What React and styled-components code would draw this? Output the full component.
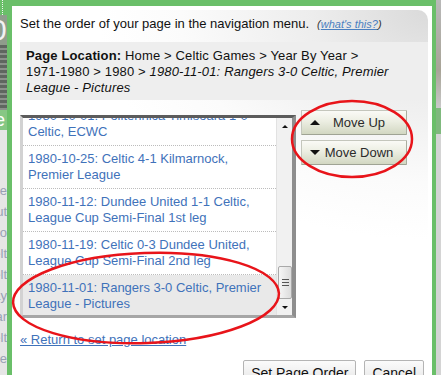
import React from "react";
import styled, { createGlobalStyle } from "styled-components";

const GlobalStyle = createGlobalStyle`
    html, body {
        margin: 0;
        padding: 0;
        background: #6abf69;
    }
    body {
        font-family: "Liberation Sans", Arial, sans-serif;
    }
`;

const items = [
    "1980-10-01: Politehnica Timisoara 1-0 Celtic, ECWC",
    "1980-10-25: Celtic 4-1 Kilmarnock, Premier League",
    "1980-11-12: Dundee United 1-1 Celtic, League Cup Semi-Final 1st leg",
    "1980-11-19: Celtic 0-3 Dundee United, League Cup Semi-Final 2nd leg",
    "1980-11-01: Rangers 3-0 Celtic, Premier League - Pictures",
];

const sideWords = ["Phone", "About", "Abo", "Celt", "Celt", "Day", "Par", "Celt", "He"];

const App = () => {
    return (
        <>
            <GlobalStyle />
            <Page>
                <LeftBackdrop>
                    <BackdropTop />
                    <BackdropBanner>0</BackdropBanner>
                    <BackdropStripes />
                    <BackdropNav>e</BackdropNav>
                    <BackdropMenu>
                        {sideWords.map((w, i) => (
                            <MenuWord key={i}><span>{w}</span></MenuWord>
                        ))}
                    </BackdropMenu>
                </LeftBackdrop>

                <Dialog>
                    <Panel>
                        <Intro>
                            Set the order of your page in the navigation menu.
                            <Help>(<a href="#">what's this?</a>)</Help>
                        </Intro>

                        <Location>
                            <b>Page Location:</b> Home &gt; Celtic Games &gt; Year By Year &gt;<br />
                            1971-1980 &gt; 1980 &gt; <i>1980-11-01: Rangers 3-0 Celtic, Premier<br />
                            League - Pictures</i>
                        </Location>

                        <OrderRow>
                            <ListBox>
                                <Viewport>
                                    <ItemTrack>
                                        {items.map((text, i) => (
                                            <Item key={i} selected={i === items.length - 1}>{text}</Item>
                                        ))}
                                    </ItemTrack>
                                </Viewport>
                                <ScrollBar>
                                    <ScrollArrow><Triangle dir="up" /></ScrollArrow>
                                    <ScrollTrack>
                                        <Thumb><Grip /><Grip /><Grip /></Thumb>
                                    </ScrollTrack>
                                    <ScrollArrow><Triangle dir="down" /></ScrollArrow>
                                </ScrollBar>
                            </ListBox>

                            <MoveButtons>
                                <MoveButton>
                                    <Triangle dir="up" size={5} />
                                    <span>Move Up</span>
                                </MoveButton>
                                <MoveButton>
                                    <Triangle dir="down" size={5} />
                                    <span>Move Down</span>
                                </MoveButton>
                            </MoveButtons>
                        </OrderRow>

                        <ReturnLink href="#">« Return to set page location</ReturnLink>

                        <Actions>
                            <ActionButton>Set Page Order</ActionButton>
                            <ActionButton>Cancel</ActionButton>
                        </Actions>
                    </Panel>
                </Dialog>

                <RightBackdrop>
                    <RightTop />
                    <RightBand />
                </RightBackdrop>

                <Annotations viewBox="0 0 441 375">
                    <ellipse cx="352" cy="139" rx="60" ry="38" />
                    <ellipse cx="146" cy="298" rx="133" ry="45" transform="rotate(-2 146 298)" />
                </Annotations>
            </Page>
        </>
    );
};

const Page = styled.div`
    position: relative;
    display: flex;
    width: 441px;
    height: 375px;
    overflow: hidden;
    background: #6abf69;
`;

const LeftBackdrop = styled.div`
    width: 7px;
    flex-shrink: 0;
    display: flex;
    flex-direction: column;
    overflow: hidden;
`;

const BackdropTop = styled.div`
    height: 15px;
    border-left: 1px dotted #f4f4f4;
    margin-left: 2px;
`;

const BackdropBanner = styled.div`
    height: 30px;
    background: #8f9c8c;
    color: #f2f2f2;
    font-size: 30px;
    line-height: 30px;
    text-indent: -10px;
    overflow: hidden;
`;

const BackdropStripes = styled.div`
    height: 65px;
    background: repeating-linear-gradient(to bottom, #5f6660 0 3px, #8b918b 3px 5px);
`;

const BackdropNav = styled.div`
    height: 20px;
    background: #86c784;
    color: #fff;
    font-size: 18px;
    line-height: 20px;
    text-indent: -5px;
    overflow: hidden;
`;

const BackdropMenu = styled.div`
    flex: 1;
    background: #e6e6e6;
    padding-top: 50px;
    display: flex;
    flex-direction: column;
`;

const MenuWord = styled.div`
    display: flex;
    justify-content: flex-end;
    height: 21px;
    font-size: 13px;
    line-height: 21px;
    color: #98a0b4;
    white-space: nowrap;
    overflow: hidden;
`;

const Dialog = styled.div`
    width: 420px;
    flex-shrink: 0;
    margin: 6px 4px 0 5px;
    padding: 4px 4px 0 0;
    background: #fff;
    box-sizing: border-box;
`;

const Panel = styled.div`
    padding: 6px 0 0 8px;
    border-radius: 0 10px 0 0;
    background: radial-gradient(ellipse 330px 230px at 100% 0%, #dadada 0%, #ededed 35%, #fbfbfb 75%, #fff 100%);
    color: #111;
    font-size: 13px;
    line-height: 16px;
`;

const Intro = styled.div`
    white-space: nowrap;
`;

const Help = styled.span`
    margin-left: 8px;
    font-size: 11px;
    font-style: italic;
    color: #333;
    a {
        color: #4a7fc0;
    }
`;

const Location = styled.div`
    margin-top: 10px;
    padding: 6px 6px 4px 6px;
    background: #eeeeee;
    white-space: nowrap;
    letter-spacing: 0.15px;
    b {
        font-weight: bold;
    }
`;

const OrderRow = styled.div`
    display: flex;
    align-items: flex-start;
    gap: 5px;
    margin-top: 10px;
`;

const ListBox = styled.div`
    display: flex;
    width: 276px;
    height: 203px;
    box-sizing: border-box;
    margin-top: 5px;
    border-top: 3px solid #5c5c5c;
    border-left: 3px solid #d2d2d2;
    border-right: 4px solid #8e8e8e;
    border-bottom: 3px solid #a6a6a6;
    background: #fff;
`;

const Viewport = styled.div`
    flex: 1;
    overflow: hidden;
`;

const ItemTrack = styled.div`
    margin-top: -15px;
`;

const Item = styled.div`
    padding: 5px 5px 5px 5px;
    border-bottom: 1px dotted #bcbcbc;
    background: ${props => props.selected ? "#e9e9e9" : "#fff"};
    color: #3f72ba;
    font-size: 13px;
    line-height: 16px;
`;

const ScrollBar = styled.div`
    width: 15px;
    display: flex;
    flex-direction: column;
    background: #f1f1f1;
    border-left: 1px solid #e2e2e2;
`;

const ScrollArrow = styled.div`
    height: 16px;
    display: flex;
    align-items: center;
    justify-content: center;
`;

const ScrollTrack = styled.div`
    flex: 1;
    display: flex;
    flex-direction: column;
    justify-content: flex-end;
`;

const Thumb = styled.div`
    height: 33px;
    box-sizing: border-box;
    margin: 0 0 0 1px;
    border: 1px solid #a9a9a9;
    border-radius: 2px;
    background: linear-gradient(to right, #f6f6f6, #dcdcdc);
    display: flex;
    flex-direction: column;
    justify-content: center;
    align-items: center;
    gap: 2px;
`;

const Grip = styled.div`
    width: 7px;
    height: 1px;
    background: #555;
`;

const Triangle = styled.span`
    width: 0;
    height: 0;
    flex-shrink: 0;
    border-left: ${props => props.size || 3}px solid transparent;
    border-right: ${props => props.size || 3}px solid transparent;
    ${props => props.dir === "up"
        ? `border-bottom: ${props.size ? props.size : 3}px solid #111;`
        : `border-top: ${props.size ? props.size : 3}px solid #111;`}
`;

const MoveButtons = styled.div`
    display: flex;
    flex-direction: column;
    gap: 5px;
`;

const MoveButton = styled.button`
    display: grid;
    grid-template-columns: 10px 1fr;
    align-items: center;
    width: 106px;
    height: 25px;
    padding: 0 8px 0 8px;
    border: 1px solid #c4c6bc;
    border-bottom-color: #9fa394;
    border-right-color: #a9ad9e;
    border-radius: 1px;
    background: linear-gradient(to bottom, #fafaf6 0%, #eceee2 45%, #d2d7c2 100%);
    color: #2b2b2b;
    font-family: "Liberation Sans", Arial, sans-serif;
    font-size: 13px;
    span {
        text-align: center;
    }
`;

const ReturnLink = styled.a`
    display: block;
    margin-top: 14px;
    width: max-content;
    color: #3f72ba;
    font-size: 13px;
    line-height: 16px;
`;

const Actions = styled.div`
    display: flex;
    justify-content: flex-end;
    gap: 8px;
    margin-top: 12px;
    padding-right: 4px;
`;

const ActionButton = styled.button`
    height: 26px;
    padding: 0 7px;
    border: 1px solid #b4b4b4;
    border-radius: 2px;
    background: linear-gradient(to bottom, #fbfbfb, #e4e4e4);
    color: #111;
    font-family: "Liberation Sans", Arial, sans-serif;
    font-size: 14px;
`;

const RightBackdrop = styled.div`
    width: 5px;
    flex-shrink: 0;
    display: flex;
    flex-direction: column;
    background: #d4d4d4;
`;

const RightTop = styled.div`
    height: 108px;
    background: linear-gradient(to bottom, #b9b9b9, #a8a497 65%, #c9c9c9);
`;

const RightBand = styled.div`
    height: 26px;
    background: #7fb97d;
`;

const Annotations = styled.svg`
    position: absolute;
    left: 0;
    top: 0;
    width: 441px;
    height: 375px;
    pointer-events: none;
    ellipse {
        fill: none;
        stroke: #e8141a;
        stroke-width: 2.5;
    }
`;

export default App;
